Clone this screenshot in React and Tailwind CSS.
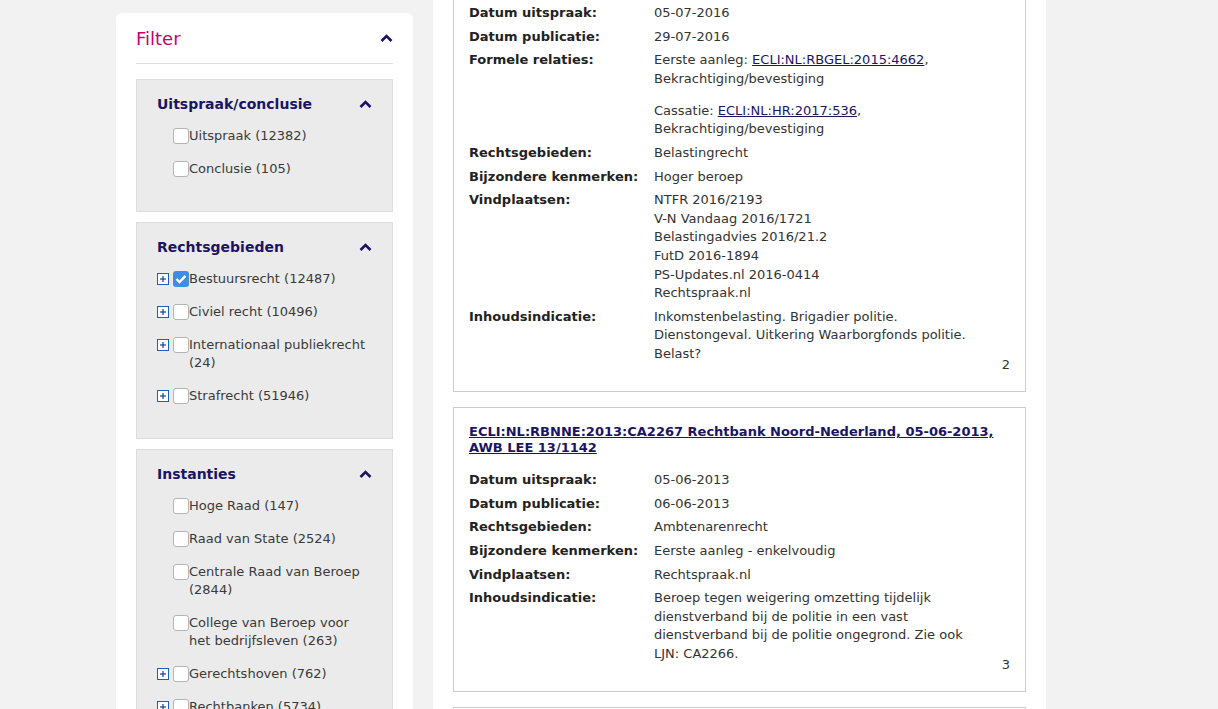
import React from 'react';

const font = { fontFamily: '"DejaVu Sans", Verdana, sans-serif' };

function Chevron() {
  return (
    <svg width="13" height="8" viewBox="0 0 13 8" className="shrink-0">
      <polyline points="1.5,7 6.5,2 11.5,7" fill="none" stroke="#1b1464" strokeWidth="2.6" />
    </svg>
  );
}

function PlusBox() {
  return (
    <svg width="12" height="12" viewBox="0 0 12 12" className="mt-[3px]">
      <rect x="0.5" y="0.5" width="11" height="11" fill="white" stroke="#1a5fc4" />
      <line x1="3" y1="6" x2="9" y2="6" stroke="#1a3f8a" strokeWidth="1.2" />
      <line x1="6" y1="3" x2="6" y2="9" stroke="#1a3f8a" strokeWidth="1.2" />
    </svg>
  );
}

function Checkbox({ checked }) {
  if (checked) {
    return (
      <span className="w-[16px] h-[16px] rounded-[3px] bg-[#3d8ee6] flex items-center justify-center shrink-0 mt-[1px]">
        <svg width="12" height="10" viewBox="0 0 12 10">
          <polyline points="1.5,5 4.5,8 10.5,1.8" fill="none" stroke="white" strokeWidth="2.4" />
        </svg>
      </span>
    );
  }
  return <span className="w-[16px] h-[16px] rounded-[3px] border border-[#b5b5b5] bg-white shrink-0 mt-[1px]" />;
}

function FilterItem({ label, plus, checked }) {
  return (
    <div className="flex items-start">
      <div className="w-[16px] shrink-0">{plus && <PlusBox />}</div>
      <Checkbox checked={checked} />
      <span className="text-[13px] leading-[18px] text-[#3a3a3a] w-[183px]">{label}</span>
    </div>
  );
}

function FilterBox({ title, items, first }) {
  return (
    <div className={`${first ? 'mt-[15px]' : 'mt-[10px]'} bg-[#ebebeb] border border-[#dddddd] px-5 pt-[15px] pb-[33px]`}>
      <div className="flex items-center justify-between h-[18px]">
        <span className="text-[14px] font-bold text-[#1b1464]">{title}</span>
        <Chevron />
      </div>
      <div className="flex flex-col gap-[15px] mt-[14px]">
        {items.map((it) => (
          <FilterItem key={it.label} {...it} />
        ))}
      </div>
    </div>
  );
}

function Row({ label, children }) {
  return (
    <div className="flex mb-[5px] text-[13px] leading-[18.6px]">
      <div className="w-[185px] shrink-0 font-bold text-[#222]">{label}</div>
      <div className="w-[330px] text-[#333]">{children}</div>
    </div>
  );
}

function Link({ children }) {
  return <a href="#" className="text-[#1b1464] underline">{children}</a>;
}

export default function App() {
  return (
    <div className="h-[709px] overflow-hidden bg-[#f2f2f2]" style={font}>
      <div className="flex gap-5 pl-[116px] items-start">
        <aside className="w-[297px] mt-[13px] bg-white rounded-[6px] px-5 pb-10">
          <div className="h-[51px] flex items-center justify-between border-b border-[#dddddd]">
            <span className="text-[18px] text-[#c8006e]">Filter</span>
            <Chevron />
          </div>
          <FilterBox
            first
            title="Uitspraak/conclusie"
            items={[{ label: 'Uitspraak (12382)' }, { label: 'Conclusie (105)' }]}
          />
          <FilterBox
            title="Rechtsgebieden"
            items={[
              { label: 'Bestuursrecht (12487)', plus: true, checked: true },
              { label: 'Civiel recht (10496)', plus: true },
              { label: 'Internationaal publiekrecht (24)', plus: true },
              { label: 'Strafrecht (51946)', plus: true },
            ]}
          />
          <FilterBox
            title="Instanties"
            items={[
              { label: 'Hoge Raad (147)' },
              { label: 'Raad van State (2524)' },
              { label: 'Centrale Raad van Beroep (2844)' },
              { label: 'College van Beroep voor het bedrijfsleven (263)' },
              { label: 'Gerechtshoven (762)', plus: true },
              { label: 'Rechtbanken (5734)', plus: true },
            ]}
          />
        </aside>

        <main className="w-[613px] bg-white px-5 min-h-[709px]">
          <div className="border border-t-0 border-[#cccccc] px-[15px] pt-[4px] pb-[17px]">
            <Row label="Datum uitspraak:">05-07-2016</Row>
            <Row label="Datum publicatie:">29-07-2016</Row>
            <Row label="Formele relaties:">
              <p className="mb-[13.5px]">
                Eerste aanleg: <Link>ECLI:NL:RBGEL:2015:4662</Link>, Bekrachtiging/bevestiging
              </p>
              <p>
                Cassatie: <Link>ECLI:NL:HR:2017:536</Link>, Bekrachtiging/bevestiging
              </p>
            </Row>
            <Row label="Rechtsgebieden:">Belastingrecht</Row>
            <Row label="Bijzondere kenmerken:">Hoger beroep</Row>
            <Row label="Vindplaatsen:">
              <div>NTFR 2016/2193</div>
              <div>V-N Vandaag 2016/1721</div>
              <div>Belastingadvies 2016/21.2</div>
              <div>FutD 2016-1894</div>
              <div>PS-Updates.nl 2016-0414</div>
              <div>Rechtspraak.nl</div>
            </Row>
            <Row label="Inhoudsindicatie:">
              Inkomstenbelasting. Brigadier politie. Dienstongeval. Uitkering Waarborgfonds politie. Belast?
            </Row>
            <div className="-mt-[13px] text-right text-[13px] leading-[18.6px] text-[#333]">2</div>
          </div>

          <div className="mt-[15px] border border-[#cccccc] px-[15px] pt-[16px] pb-[17px]">
            <a href="#" className="block text-[13px] leading-[15.5px] font-bold text-[#1b1464] underline mb-[16px]">
              ECLI:NL:RBNNE:2013:CA2267 Rechtbank Noord-Nederland, 05-06-2013, AWB LEE 13/1142
            </a>
            <Row label="Datum uitspraak:">05-06-2013</Row>
            <Row label="Datum publicatie:">06-06-2013</Row>
            <Row label="Rechtsgebieden:">Ambtenarenrecht</Row>
            <Row label="Bijzondere kenmerken:">Eerste aanleg - enkelvoudig</Row>
            <Row label="Vindplaatsen:">Rechtspraak.nl</Row>
            <Row label="Inhoudsindicatie:">
              Beroep tegen weigering omzetting tijdelijk dienstverband bij de politie in een vast dienstverband bij de politie ongegrond. Zie ook LJN: CA2266.
            </Row>
            <div className="-mt-[13px] text-right text-[13px] leading-[18.6px] text-[#333]">3</div>
          </div>

          <div className="mt-[15px] border border-[#cccccc] h-[120px]" />
        </main>
      </div>
    </div>
  );
}
